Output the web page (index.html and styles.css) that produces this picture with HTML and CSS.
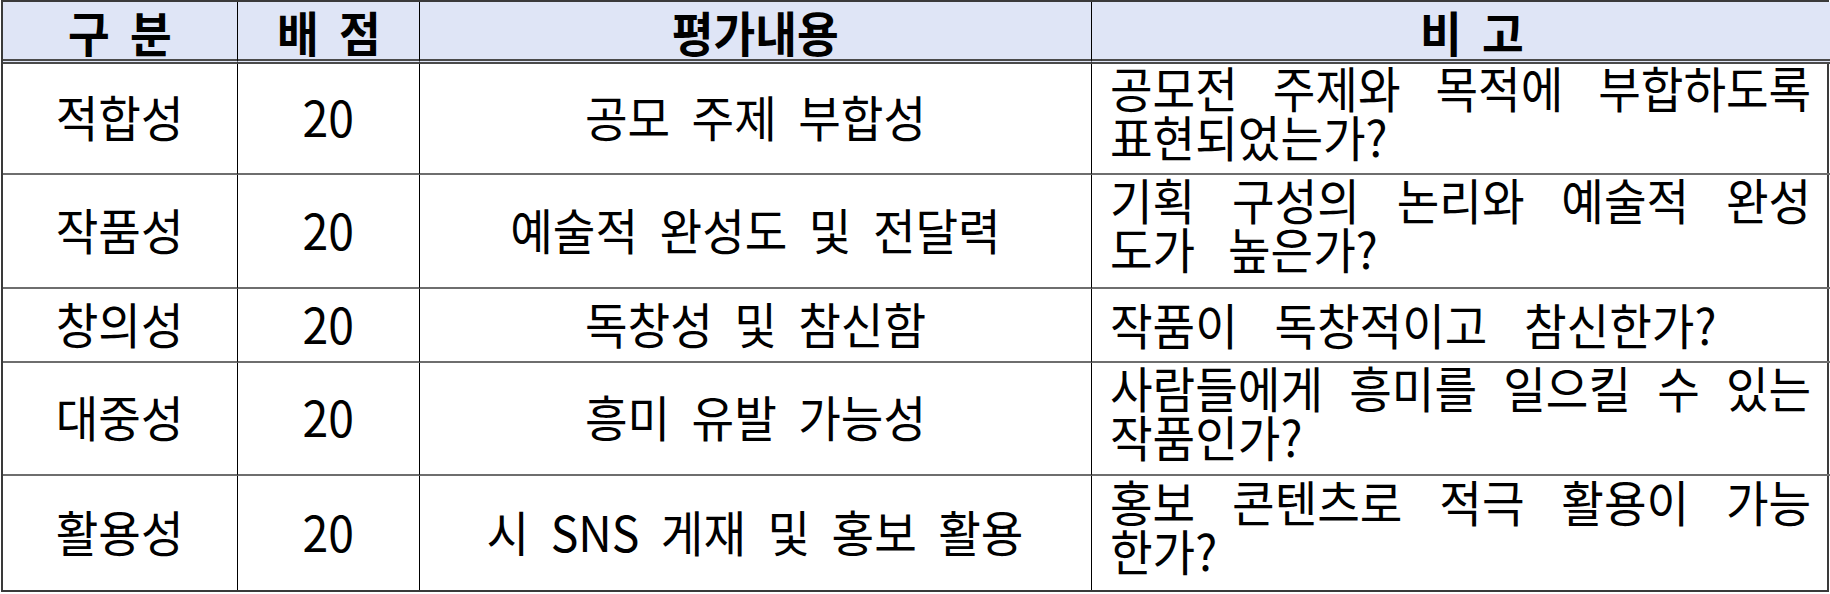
FILE: index.html
```html
<!DOCTYPE html>
<html lang="ko">
<head>
<meta charset="utf-8">
<link rel="stylesheet" href="styles.css">
</head>
<body>
<div class="sheet">
  <div class="cell head"><span class="t">구 분</span></div>
  <div class="cell head"><span class="t">배 점</span></div>
  <div class="cell head"><span class="t">평가내용</span></div>
  <div class="cell head last"><span class="t">비 고</span></div>

  <div class="cell"><span class="t">적합성</span></div>
  <div class="cell"><span class="t">20</span></div>
  <div class="cell wide"><span class="t">공모 주제 부합성</span></div>
  <div class="cell last note two"><div class="nt"><span class="jl">공모전 주제와 목적에 부합하도록</span><span class="ll">표현되었는가?</span></div></div>

  <div class="cell"><span class="t">작품성</span></div>
  <div class="cell"><span class="t">20</span></div>
  <div class="cell wide"><span class="t">예술적 완성도 및 전달력</span></div>
  <div class="cell last note two"><div class="nt"><span class="jl">기획 구성의 논리와 예술적 완성</span><span class="ll">도가 높은가?</span></div></div>

  <div class="cell"><span class="t">창의성</span></div>
  <div class="cell"><span class="t">20</span></div>
  <div class="cell wide"><span class="t">독창성 및 참신함</span></div>
  <div class="cell last note"><div class="nt"><span class="ll single">작품이 독창적이고 참신한가?</span></div></div>

  <div class="cell"><span class="t">대중성</span></div>
  <div class="cell"><span class="t">20</span></div>
  <div class="cell wide"><span class="t">흥미 유발 가능성</span></div>
  <div class="cell last note two"><div class="nt"><span class="jl">사람들에게 흥미를 일으킬 수 있는</span><span class="ll">작품인가?</span></div></div>

  <div class="cell end"><span class="t">활용성</span></div>
  <div class="cell end"><span class="t">20</span></div>
  <div class="cell end wide"><span class="t">시 SNS 게재 및 홍보 활용</span></div>
  <div class="cell end last note two"><div class="nt"><span class="jl">홍보 콘텐츠로 적극 활용이 가능</span><span class="ll">한가?</span></div></div>
</div>
</body>
</html>
```

FILE: styles.css
```css
html, body {
  margin: 0;
  padding: 0;
  background: #ffffff;
}

.sheet {
  margin-left: 1px;
  width: 1824px;
  border: 2px solid #3a3a3a;
  display: grid;
  grid-template-columns: 235px 182px 672px 1fr;
  grid-template-rows: 62px 111px 114px 74px 113px 114px;
  font-family: "Noto Sans CJK KR", "Noto Sans", sans-serif;
  font-size: 49px;
  color: #000000;
}

.cell {
  display: flex;
  align-items: center;
  justify-content: center;
  border-right: 1px solid #000000;
  border-bottom: 2px solid #6e6e6e;
  box-sizing: border-box;
  line-height: 1;
  white-space: nowrap;
  padding-bottom: 6px;
}

.cell.last {
  border-right: none;
}

.cell.end {
  border-bottom: none;
}

.t {
  display: inline-block;
  transform: scaleX(0.945);
}

.head {
  background: #dfe5f6;
  font-weight: 700;
  font-size: 48px;
  line-height: 52px;
  border-bottom: 5px double #4a4a4a;
  word-spacing: 8px;
  padding-bottom: 0;
}

.wide {
  word-spacing: 9px;
}

.note {
  justify-content: flex-start;
  padding: 0 0 4px 18px;
}

.note.two {
  padding-bottom: 16px;
}

.nt {
  flex: none;
  width: 742px;
  transform: scaleX(0.945);
  transform-origin: 0 50%;
}

.jl {
  display: block;
  text-align: justify;
  text-align-last: justify;
  line-height: 49px;
}

.ll {
  display: block;
  text-align: left;
  line-height: 49px;
  word-spacing: 21px;
}

.ll.single {
  word-spacing: 25px;
}
```
